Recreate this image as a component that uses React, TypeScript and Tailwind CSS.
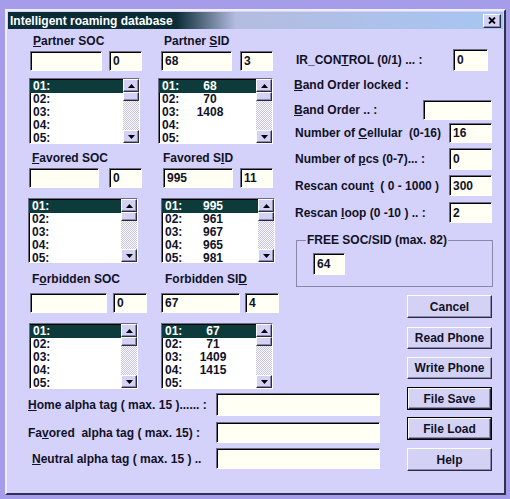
import React from "react";

const sunken =
  "border border-t-[#6c6c88] border-l-[#6c6c88] border-r-white border-b-white shadow-[inset_1px_1px_0_#000000]";
const raised =
  "bg-[#d4d2f4] border border-t-white border-l-white border-r-[#2c2c40] border-b-[#2c2c40] shadow-[inset_-1px_-1px_0_#8c8aae]";

type BoxProps = { className: string; value?: string };

const Box = ({ className, value = "" }: BoxProps) => (
  <div className={`${sunken} bg-[#fffff4] flex items-center pl-[3px] leading-[14px] ${className}`}>
    {value}
  </div>
);

const Arrow = ({ down }: { down?: boolean }) => (
  <svg width="7" height="4" viewBox="0 0 7 4">
    <polygon points={down ? "0,0 7,0 3.5,4" : "3.5,0 7,4 0,4"} fill="#000" />
  </svg>
);

const ScrollBar = () => (
  <div className="w-[16px] flex flex-col bg-[repeating-conic-gradient(#ffffff_0%_25%,#c4c2ea_0%_50%)] bg-[length:2px_2px]">
    <div className={`${raised} h-[13px] flex items-center justify-center`}>
      <Arrow />
    </div>
    <div className={`${raised} h-[9px]`} />
    <div className="flex-1" />
    <div className={`${raised} h-[13px] flex items-center justify-center`}>
      <Arrow down />
    </div>
  </div>
);

const ListBox = ({ className, values }: { className: string; values: string[] }) => (
  <div className={`${sunken} bg-white flex overflow-hidden ${className}`}>
    <div className="flex-1 overflow-hidden pt-[1px]">
      {["01:", "02:", "03:", "04:", "05:"].map((p, i) => (
        <div
          key={p}
          className={`h-[13px] leading-[13px] flex pl-[3px] ${i === 0 ? "bg-[#0d3b3b] text-white" : ""}`}
        >
          <span className="w-[28px]">{p}</span>
          <span className="w-[40px] text-center">{values[i] ?? ""}</span>
        </div>
      ))}
    </div>
    <ScrollBar />
  </div>
);

const Button = ({ label, def, className }: { label: string; def?: boolean; className: string }) =>
  def ? (
    <div className={`border border-black w-[85px] ${className} flex`}>
      <div className={`${raised} flex-1 flex items-center justify-center`}>{label}</div>
    </div>
  ) : (
    <div className={`${raised} w-[85px] ${className} flex items-center justify-center`}>{label}</div>
  );

const Row = ({ children, className }: { children: React.ReactNode; className: string }) => (
  <div className={`flex items-center whitespace-pre ${className}`}>{children}</div>
);

export default function App() {
  return (
    <div className="w-[510px] h-[499px] bg-[#a59de9] pt-[9px] pl-[5px] overflow-hidden font-['Liberation_Sans',Arial,sans-serif] font-bold text-[12px] leading-[14px] text-[#111126]">
      <div className="w-[501px] h-[486px] bg-[#d4d2fa] border-2 border-t-[#eeeeff] border-l-[#eeeeff] border-r-[#303050] border-b-[#303050] p-[1px] flex flex-col">
        {/* title bar */}
        <div className="h-[17px] flex items-center bg-[linear-gradient(90deg,#0a2c36_0%,#0a2c36_34%,#b4bce0_46%,#a6c6f2_100%)]">
          <span className="ml-[2px] text-white">Intelligent roaming database</span>
          <div className={`${raised} ml-auto mr-[2px] w-[18px] h-[14px] flex items-center justify-center`}>
            <svg width="8" height="7" viewBox="0 0 8 7">
              <path d="M1 0.5 L7 6.5 M7 0.5 L1 6.5" stroke="#000" strokeWidth="1.8" />
            </svg>
          </div>
        </div>

        <div className="pt-[5px] pl-[20px] grid grid-cols-[262px_117px_86px] grid-rows-[256px_100px_auto]">
          {/* left column */}
          <div className="col-start-1 row-start-1 row-span-2 flex flex-col">
            {/* Partner */}
            <div className="flex h-[14px]">
              <span className="w-[136px] pl-[5px]"><u>P</u>artner SOC</span>
              <span>Partner <u>S</u>ID</span>
            </div>
            <div className="flex mt-[3px]">
              <Box className="ml-[2px] w-[72px] h-[20px]" />
              <Box className="ml-[7px] w-[33px] h-[20px]" value="0" />
              <Box className="ml-[19px] w-[71px] h-[20px]" value="68" />
              <Box className="ml-[8px] w-[33px] h-[20px]" value="3" />
            </div>
            <div className="flex mt-[7px]">
              <ListBox className="ml-[1px] w-[111px] h-[66px]" values={[]} />
              <ListBox className="ml-[18px] w-[115px] h-[66px]" values={["68", "70", "1408"]} />
            </div>

            {/* Favored */}
            <div className="flex h-[14px] mt-[7px]">
              <span className="w-[135px] pl-[4px]"><u>F</u>avored SOC</span>
              <span>Favored S<u>I</u>D</span>
            </div>
            <div className="flex mt-[3px]">
              <Box className="ml-[1px] w-[70px] h-[20px]" />
              <Box className="ml-[10px] w-[33px] h-[20px]" value="0" />
              <Box className="ml-[21px] w-[70px] h-[20px]" value="995" />
              <Box className="ml-[7px] w-[33px] h-[20px]" value="11" />
            </div>
            <div className="flex mt-[10px]">
              <ListBox className="w-[110px] h-[65px]" values={[]} />
              <ListBox className="ml-[23px] w-[114px] h-[65px]" values={["995", "961", "967", "965", "981"]} />
            </div>

            {/* Forbidden */}
            <div className="flex h-[14px] mt-[9px]">
              <span className="w-[137px] pl-[4px]">F<u>o</u>rbidden SOC</span>
              <span>Forbidden SI<u>D</u></span>
            </div>
            <div className="flex mt-[7px]">
              <Box className="ml-[2px] w-[77px] h-[20px]" />
              <Box className="ml-[6px] w-[34px] h-[20px]" value="0" />
              <Box className="ml-[14px] w-[79px] h-[20px]" value="67" />
              <Box className="ml-[5px] w-[34px] h-[20px]" value="4" />
            </div>
            <div className="flex mt-[10px]">
              <ListBox className="ml-[1px] w-[109px] h-[66px]" values={[]} />
              <ListBox className="ml-[23px] w-[112px] h-[66px]" values={["67", "71", "1409", "1415"]} />
            </div>
          </div>

          {/* right fields */}
          <div className="col-start-2 col-span-2 row-start-1 flex flex-col">
            <Row className="mt-[15px] h-[22px]">
              <span className="ml-[6px]">IR_CON<u>T</u>ROL (0/1) ... :</span>
              <Box className="ml-auto mr-[5px] w-[35px] h-[22px]" value="0" />
            </Row>
            <Row className="mt-[7px] h-[14px]">
              <span className="ml-[4px]"><u>B</u>and Order locked :</span>
            </Row>
            <Row className="mt-[8px] h-[20px]">
              <span className="ml-[4px]"><u>B</u>and Order .. :</span>
              <Box className="ml-auto mr-[1px] w-[69px] h-[20px]" />
            </Row>
            <Row className="mt-[3px] h-[20px]">
              <span className="ml-[5px]">Number of <u>C</u>ellular  (0-16)</span>
              <Box className="ml-auto mr-[1px] w-[43px] h-[20px]" value="16" />
            </Row>
            <Row className="mt-[5px] h-[22px]">
              <span className="ml-[5px]">Number of <u>p</u>cs (0-7)... :</span>
              <Box className="ml-auto mr-[1px] w-[43px] h-[22px]" value="0" />
            </Row>
            <Row className="mt-[5px] h-[21px]">
              <span className="ml-[5px]">Rescan coun<u>t</u>  ( 0 - 1000 )</span>
              <Box className="ml-auto mr-[1px] w-[43px] h-[21px]" value="300" />
            </Row>
            <Row className="mt-[6px] h-[21px]">
              <span className="ml-[5px]">Rescan <u>l</u>oop (0 -10 ) .. :</span>
              <Box className="ml-auto mr-[1px] w-[43px] h-[21px]" value="2" />
            </Row>
            <fieldset className="mt-[10px] ml-[6px] w-[197px] border border-[#8a88aa] pb-[11px]">
              <legend className="ml-[9px] px-[1px]">FREE SOC/SID (max. 82)</legend>
              <Box className="mt-[6px] ml-[16px] w-[32px] h-[22px]" value="64" />
            </fieldset>
          </div>

          {/* buttons */}
          <div className="col-start-3 row-start-2 row-span-2 flex flex-col">
            <Button label="Cancel" className="mt-[5px] h-[23px]" />
            <Button label="Read Phone" className="mt-[9px] h-[22px]" />
            <Button label="Write Phone" className="mt-[8px] h-[22px]" />
            <Button label="File Save" def className="mt-[8px] h-[23px]" />
            <Button label="File Load" def className="mt-[7px] h-[23px]" />
            <Button label="Help" className="mt-[8px] h-[23px]" />
          </div>

          {/* alpha tags */}
          <div className="col-start-1 col-span-2 row-start-3 flex flex-col">
            <Row className="mt-[3px] h-[23px]">
              <span className="w-[188px]"><u>H</u>ome alpha tag ( max. 15 )...... :</span>
              <Box className="w-[164px] h-[23px]" />
            </Row>
            <Row className="mt-[6px] h-[21px]">
              <span className="w-[188px]">Fa<u>v</u>ored  alpha tag ( max. 15) :</span>
              <Box className="w-[164px] h-[21px]" />
            </Row>
            <Row className="mt-[5px] h-[21px]">
              <span className="w-[188px] pl-[4px]"><u>N</u>eutral alpha tag ( max. 15 ) ..</span>
              <Box className="w-[164px] h-[21px]" />
            </Row>
          </div>
        </div>
      </div>
    </div>
  );
}
